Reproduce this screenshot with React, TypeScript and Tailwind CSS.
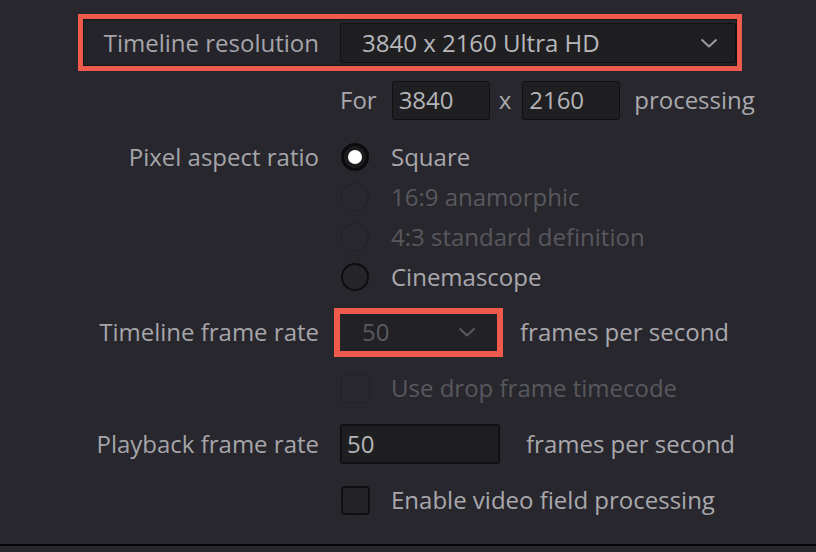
import React from "react";

const Chevron = ({ className }: { className: string }) => (
  <svg width="18" height="10" viewBox="0 0 18 10" fill="none" className={className}>
    <polyline points="1.5,1.5 9,8.5 16.5,1.5" stroke="currentColor" strokeWidth="2" strokeLinejoin="round" />
  </svg>
);

const Label = ({ children }: { children?: React.ReactNode }) => (
  <div className="w-[257px] shrink-0 whitespace-nowrap pr-[21px] text-right text-[#a5a5aa]">{children}</div>
);

const Radio = ({ state, label }: { state: "on" | "off" | "disabled"; label: string }) => (
  <div className="flex h-[40px] items-center">
    <Label />
    <div className="flex items-center gap-[22px]">
      {state === "on" && (
        <span className="ml-[1px] flex h-[28px] w-[28px] items-center justify-center rounded-full border-[3px] border-[#0b0b0d] bg-[#1c1c1f]">
          <span className="h-[14px] w-[14px] rounded-full bg-white" />
        </span>
      )}
      {state === "off" && (
        <span className="ml-[1px] h-[28px] w-[28px] rounded-full border-2 border-[#0e0e10] bg-[#262629]" />
      )}
      {state === "disabled" && (
        <span className="ml-[1px] h-[28px] w-[28px] rounded-full border border-[#222126] bg-[#29282e]" />
      )}
      <span className={state === "disabled" ? "text-[#58585e]" : "text-[#a8a8ad]"}>{label}</span>
    </div>
  </div>
);

const Checkbox = ({ label, disabled }: { label: string; disabled?: boolean }) => (
  <div className="flex h-[40px] items-center">
    <Label />
    <div className="flex items-center gap-[21px]">
      <span
        className={
          disabled
            ? "ml-[1px] h-[29px] w-[29px] rounded-[4px] border border-[#222126] bg-[#29282e]"
            : "ml-[1px] h-[29px] w-[29px] rounded-[4px] border-2 border-[#101012] bg-[#242427]"
        }
      />
      <span className={disabled ? "text-[#58585e]" : "text-[#a8a8ad]"}>{label}</span>
    </div>
  </div>
);

export default function App() {
  return (
    <div
      className="h-[552px] w-[816px] overflow-hidden bg-[#28272d] text-[24px] leading-none"
      style={{ fontFamily: '"Open Sans", "Noto Sans", sans-serif' }}
    >
      <div className="h-[546px] border-b-2 border-[#050507] pl-[83px] pt-[19px]">
        {/* resolution row, highlighted */}
        <div className="flex h-[47px] w-[654px] items-center border border-[#141417] bg-[#25242a] outline-[5px] outline-solid outline-[#ee5a4c]">
          <div className="w-[256px] shrink-0 whitespace-nowrap pr-[21px] text-right text-[#a5a5aa]">Timeline resolution</div>
          <div className="flex h-[40px] flex-1 items-center justify-between rounded-[3px] border border-[#101012] bg-[#1f1f22] pl-[21px] pr-[17px] text-[#b7b7bb]">
            <span>3840 x 2160 Ultra HD</span>
            <Chevron className="text-[#9a9a9f]" />
          </div>
        </div>

        <div className="mt-[14px] flex h-[40px] items-center">
          <Label />
          <div className="flex items-center text-[#a8a8ad]">
            <span>For</span>
            <div className="ml-[15px] flex h-[39px] w-[98px] items-center rounded-[3px] border border-[#101012] bg-[#1f1f22] pl-[6px] text-[#b4b4b8]">3840</div>
            <span className="ml-[9px]">x</span>
            <div className="ml-[11px] flex h-[39px] w-[98px] items-center rounded-[3px] border border-[#101012] bg-[#1f1f22] pl-[6px] text-[#b4b4b8]">2160</div>
            <span className="ml-[14px]">processing</span>
          </div>
        </div>

        <div className="mt-[17px] flex h-[40px] items-center">
          <Label>Pixel aspect ratio</Label>
          <div className="flex items-center gap-[22px]">
            <span className="ml-[1px] flex h-[28px] w-[28px] items-center justify-center rounded-full border-[3px] border-[#0b0b0d] bg-[#1c1c1f]">
              <span className="h-[14px] w-[14px] rounded-full bg-white" />
            </span>
            <span className="text-[#a8a8ad]">Square</span>
          </div>
        </div>
        <Radio state="disabled" label="16:9 anamorphic" />
        <Radio state="disabled" label="4:3 standard definition" />
        <Radio state="off" label="Cinemascope" />

        <div className="mt-[11px] flex h-[48px] items-center">
          <Label>Timeline frame rate</Label>
          <div className="flex h-[37px] w-[157px] items-center justify-between bg-[#222126] pl-[22px] pr-[21px] text-[#5a5a60] outline-[6px] outline-solid outline-[#ee5a4c]">
            <span>50</span>
            <Chevron className="text-[#5a5a60]" />
          </div>
          <span className="ml-[23px] text-[#a8a8ad]">frames per second</span>
        </div>

        <div className="mt-[12px]">
          <Checkbox label="Use drop frame timecode" disabled />
        </div>

        <div className="mt-[16px] flex h-[40px] items-center">
          <Label>Playback frame rate</Label>
          <div className="flex h-[40px] w-[160px] items-center rounded-[3px] border-2 border-[#111113] bg-[#1f1f22] pl-[5px] text-[#b4b4b8]">50</div>
          <span className="ml-[26px] text-[#a8a8ad]">frames per second</span>
        </div>

        <div className="mt-[16px]">
          <Checkbox label="Enable video field processing" />
        </div>
      </div>
    </div>
  );
}
